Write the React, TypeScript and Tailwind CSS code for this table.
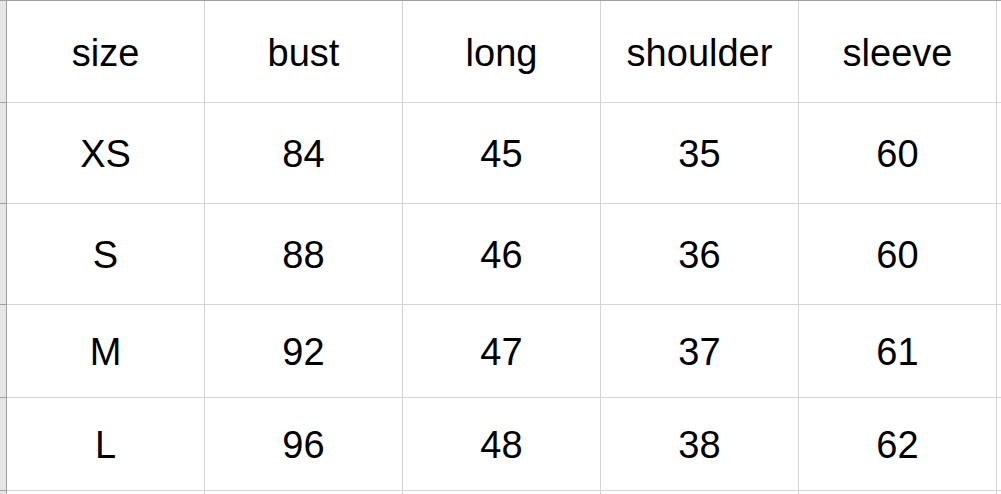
const header = ["size", "bust", "long", "shoulder", "sleeve"]

const rows = [
  { h: "h-[102px]", cells: header },
  { h: "h-[101px]", cells: ["XS", "84", "45", "35", "60"] },
  { h: "h-[101px]", cells: ["S", "88", "46", "36", "60"] },
  { h: "h-[93px]", cells: ["M", "92", "47", "37", "61"] },
  { h: "h-[93px]", cells: ["L", "96", "48", "38", "62"] },
]

export default function App() {
  return (
    <div className="w-[1001px] h-[494px] overflow-hidden bg-white border-t border-[#a0a0a0] font-['Liberation_Sans',Arial,sans-serif] text-[38px] text-black">
      {rows.map((row, i) => (
        <div key={i} className={`flex ${row.h}`}>
          <div className="w-[7px] shrink-0 bg-[#e6e6e6] border-r border-b border-[#a0a0a0]" />
          {row.cells.map((c, j) => (
            <div
              key={j}
              className="w-[198px] shrink-0 flex items-center justify-center pt-[3px] border-r border-b border-[#d4d4d4]"
            >
              {c}
            </div>
          ))}
          <div className="flex-1 border-b border-[#d4d4d4]" />
        </div>
      ))}
      <div className="flex h-[3px]">
        <div className="w-[7px] shrink-0 bg-[#e6e6e6] border-r border-[#a0a0a0]" />
        {header.map((_, j) => (
          <div key={j} className="w-[198px] shrink-0 border-r border-[#d4d4d4]" />
        ))}
      </div>
    </div>
  )
}
